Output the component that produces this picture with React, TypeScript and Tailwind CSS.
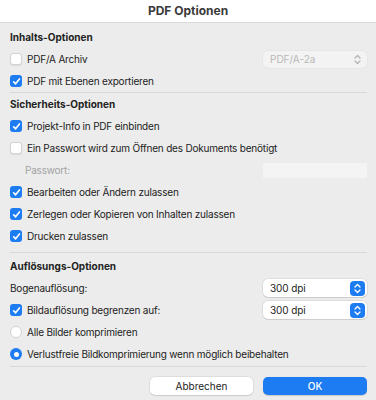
import React from "react";

const font = { fontFamily: "Inter, 'Noto Sans', sans-serif" };

function Check({ checked }: { checked: boolean }) {
  if (checked) {
    return (
      <div className="w-[12px] h-[12px] rounded-[3px] bg-[#1d7cf2] flex items-center justify-center shrink-0">
        <svg width="9" height="9" viewBox="0 0 10 10">
          <path d="M1.8 5.3 L4 7.6 L8.3 2.2" fill="none" stroke="white" strokeWidth="1.8" strokeLinecap="round" strokeLinejoin="round" />
        </svg>
      </div>
    );
  }
  return <div className="w-[12px] h-[12px] rounded-[3px] bg-white border border-[#d4d4d4] shrink-0 shadow-[0_0.5px_1px_rgba(0,0,0,0.08)]" />;
}

function Radio({ checked }: { checked: boolean }) {
  if (checked) {
    return (
      <div className="w-[12px] h-[12px] rounded-full bg-[#1d7cf2] flex items-center justify-center shrink-0">
        <div className="w-[5px] h-[5px] rounded-full bg-white" />
      </div>
    );
  }
  return <div className="w-[12px] h-[12px] rounded-full bg-white border border-[#d4d4d4] shrink-0" />;
}

function CheckRow({ checked, label, right }: { checked: boolean; label: string; right?: React.ReactNode }) {
  return (
    <div className="h-[22px] flex items-center">
      <Check checked={checked} />
      <span className="ml-[5px] text-[10px] tracking-[-0.2px] text-[#222222]">{label}</span>
      {right && <div className="ml-auto">{right}</div>}
    </div>
  );
}

function RadioRow({ checked, label }: { checked: boolean; label: string }) {
  return (
    <div className="h-[22px] flex items-center">
      <Radio checked={checked} />
      <span className="ml-[5px] text-[10px] tracking-[-0.2px] text-[#222222]">{label}</span>
    </div>
  );
}

function Chevrons({ color }: { color: string }) {
  return (
    <svg width="7" height="11" viewBox="0 0 7 11">
      <path d="M1 4 L3.5 1.5 L6 4" fill="none" stroke={color} strokeWidth="1.3" strokeLinecap="round" strokeLinejoin="round" />
      <path d="M1 7 L3.5 9.5 L6 7" fill="none" stroke={color} strokeWidth="1.3" strokeLinecap="round" strokeLinejoin="round" />
    </svg>
  );
}

function Select({ value }: { value: string }) {
  return (
    <div className="w-[104px] h-[18px] bg-white rounded-[5px] shadow-[0_0_0_0.5px_rgba(0,0,0,0.12),0_1px_1px_rgba(0,0,0,0.08)] flex items-center pl-[7px] pr-[2px]">
      <span className="text-[10px] tracking-[-0.1px] text-[#222222]">{value}</span>
      <div className="ml-auto w-[15px] h-[15px] rounded-[4px] bg-[#1d7cf2] flex items-center justify-center">
        <Chevrons color="white" />
      </div>
    </div>
  );
}

function DisabledSelect({ value }: { value: string }) {
  return (
    <div className="w-[104px] h-[17px] bg-[#f3f3f3] rounded-[5px] shadow-[0_0_0_0.5px_rgba(0,0,0,0.05)] flex items-center pl-[7px] pr-[6px]">
      <span className="text-[10px] text-[#b8b8b8]">{value}</span>
      <div className="ml-auto flex items-center">
        <Chevrons color="#b5b5b5" />
      </div>
    </div>
  );
}

function Header({ children }: { children: React.ReactNode }) {
  return <div className="h-[22px] flex items-center text-[10px] font-bold text-[#222222]">{children}</div>;
}

function Sep() {
  return <div className="h-[1px] bg-[#d9d9d9] ml-[10px] mr-[9px]" />;
}

export default function App() {
  return (
    <div className="w-[376px] h-[400px] bg-[#ececec] flex flex-col overflow-hidden" style={font}>
      <div className="h-[22px] bg-white border-b border-[#dadada] flex items-center justify-center shrink-0 box-content">
        <span className="text-[12px] font-bold text-[#3a3a3a]">PDF Optionen</span>
      </div>

      <div className="pt-[3px] px-[10px] pr-[9px]">
        <Header>Inhalts-Optionen</Header>
        <CheckRow checked={false} label="PDF/A Archiv" right={<DisabledSelect value="PDF/A-2a" />} />
        <CheckRow checked={true} label="PDF mit Ebenen exportieren" />
      </div>
      <Sep />

      <div className="px-[10px] pr-[9px] pb-[5px]">
        <Header>Sicherheits-Optionen</Header>
        <CheckRow checked={true} label="Projekt-Info in PDF einbinden" />
        <CheckRow checked={false} label="Ein Passwort wird zum Öffnen des Dokuments benötigt" />
        <div className="h-[22px] flex items-center">
          <span className="ml-[15px] text-[10px] tracking-[-0.2px] text-[#a3a3a3]">Passwort:</span>
          <div className="ml-auto w-[104px] h-[15px] bg-[#f4f4f4]" />
        </div>
        <CheckRow checked={true} label="Bearbeiten oder Ändern zulassen" />
        <CheckRow checked={true} label="Zerlegen oder Kopieren von Inhalten zulassen" />
        <CheckRow checked={true} label="Drucken zulassen" />
      </div>
      <Sep />

      <div className="pt-[2px] px-[10px] pr-[9px] pb-[1px]">
        <Header>Auflösungs-Optionen</Header>
        <div className="h-[22px] flex items-center">
          <span className="text-[10px] tracking-[-0.2px] text-[#222222]">Bogenauflösung:</span>
          <div className="ml-auto">
            <Select value="300 dpi" />
          </div>
        </div>
        <CheckRow checked={true} label="Bildauflösung begrenzen auf:" right={<Select value="300 dpi" />} />
        <RadioRow checked={false} label="Alle Bilder komprimieren" />
        <RadioRow checked={true} label="Verlustfreie Bildkomprimierung wenn möglich beibehalten" />
      </div>
      <Sep />

      <div className="flex justify-end gap-[10px] pt-[10px] pr-[9px]">
        <button className="w-[103px] h-[18px] bg-white rounded-[5px] shadow-[0_0_0_0.5px_rgba(0,0,0,0.12),0_1px_1px_rgba(0,0,0,0.08)] text-[10px] text-[#222222] flex items-center justify-center">
          Abbrechen
        </button>
        <button className="w-[104px] h-[18px] bg-[#1d7cf2] rounded-[5px] shadow-[0_0.5px_1px_rgba(0,0,0,0.15)] text-[10px] font-medium text-white flex items-center justify-center">
          OK
        </button>
      </div>
    </div>
  );
}
